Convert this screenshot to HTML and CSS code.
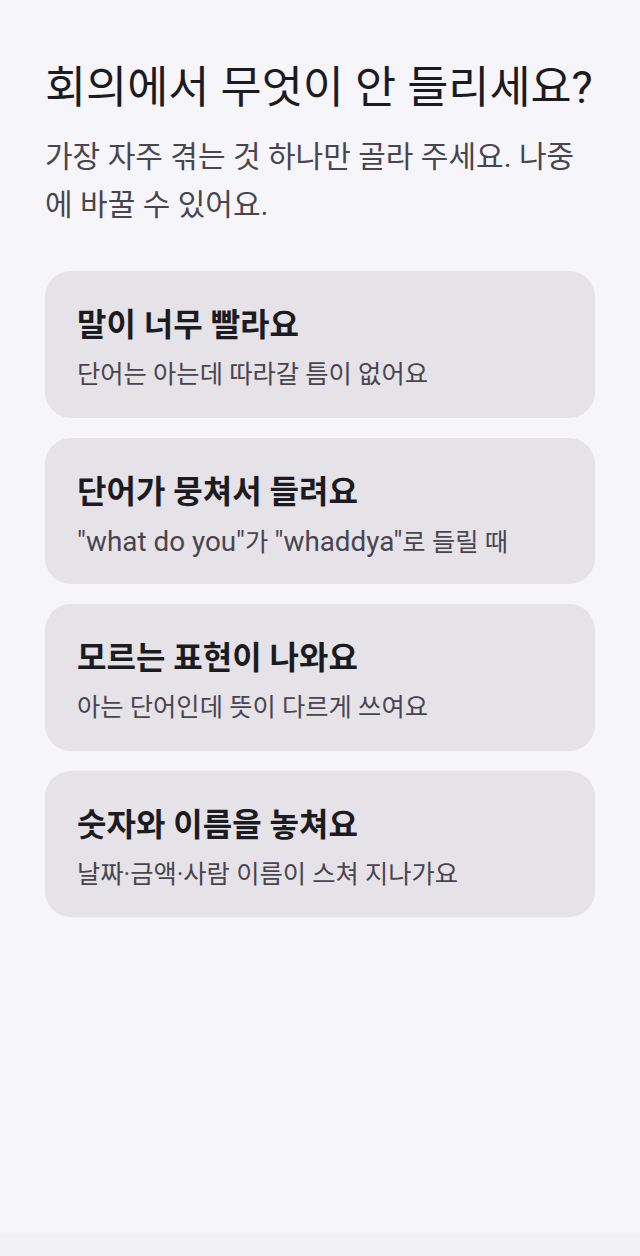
FILE: index.html
```html
<!DOCTYPE html>
<html lang="ko">
<head>
  <meta charset="UTF-8" />
  <meta name="viewport" content="width=device-width, initial-scale=1.0" />
  <title>회의에서 무엇이 안 들리세요?</title>
  <link rel="stylesheet" href="styles.css">
</head>
<body>
  <main class="page">
    <h1 class="title">회의에서 무엇이 안 들리세요?</h1>
    <p class="lead">가장 자주 겪는 것 하나만 골라 주세요. 나중에 바꿀 수 있어요.</p>

    <div class="options">
      <button class="option">
        <span class="option-title">말이 너무 빨라요</span>
        <span class="option-desc">단어는 아는데 따라갈 틈이 없어요</span>
      </button>
      <button class="option">
        <span class="option-title">단어가 뭉쳐서 들려요</span>
        <span class="option-desc"><span class="en">"what do you"</span>가 <span class="en">"whaddya"</span>로 들릴 때</span>
      </button>
      <button class="option">
        <span class="option-title">모르는 표현이 나와요</span>
        <span class="option-desc">아는 단어인데 뜻이 다르게 쓰여요</span>
      </button>
      <button class="option">
        <span class="option-title">숫자와 이름을 놓쳐요</span>
        <span class="option-desc">날짜·금액·사람 이름이 스쳐 지나가요</span>
      </button>
    </div>
  </main>
  <div class="navbar"></div>
</body>
</html>
```

FILE: styles.css
```css
body {
  margin: 0;
  height: 100vh;
  display: flex;
  flex-direction: column;
  background-color: #f6f5fa;
  color: #1c1b1f;
  font-family: Roboto, "Noto Sans CJK KR", sans-serif;
  overflow: hidden;
}
.page {
  flex: 1;
  padding: 61px 45px 0 45px;
}
.title {
  margin: 0;
  font-size: 44.7px;
  font-weight: 400;
  line-height: 54px;
  white-space: nowrap;
}
.lead {
  margin: 18px 0 0 0;
  font-size: 30px;
  line-height: 48px;
  color: #49454f;
}
.options {
  margin-top: 42px;
  display: flex;
  flex-direction: column;
  gap: 20px;
}
.option {
  display: flex;
  flex-direction: column;
  align-items: flex-start;
  gap: 14px;
  width: 100%;
  height: 146.5px;
  padding: 34px 32px 0 32px;
  border: none;
  border-radius: 26px;
  background-color: #e5e2e8;
  font-family: inherit;
  text-align: left;
  cursor: pointer;
}
.option-title {
  font-size: 32px;
  font-weight: 700;
  line-height: 40px;
  color: #1c1b1f;
}
.option-desc {
  font-size: 25.3px;
  line-height: 32px;
  color: #49454f;
}
/* latin runs render a bit bigger next to hangul */
.option-desc .en {
  font-size: 1.1em;
}
.navbar {
  height: 23px;
  background-color: #f2f1f4;
}
```
